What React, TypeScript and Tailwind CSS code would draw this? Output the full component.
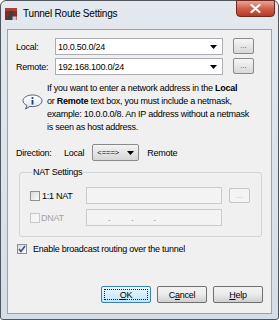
import React from "react";

const font = "font-['Liberation_Sans',Arial,sans-serif]";

function Arrow() {
  return (
    <svg width="7" height="4" viewBox="0 0 7 4" className="shrink-0">
      <path d="M0 0 H7 L3.5 4 Z" fill="#000" />
    </svg>
  );
}

function Combo({ value }: { value: string }) {
  return (
    <div className="w-[168px] h-[17px] border border-[#abadb3] bg-white flex items-center pl-[2px] pr-[5px]">
      <span className="flex-1 text-black">{value}</span>
      <Arrow />
    </div>
  );
}

function DotsButton({ disabled = false }: { disabled?: boolean }) {
  return (
    <div
      className={
        disabled
          ? "w-[21px] h-[15px] rounded-[2px] border border-[#c4c4c4] bg-[#f4f4f4] flex items-center justify-center text-[8px] leading-[8px] tracking-normal text-[#b5b5b5]"
          : "w-[21px] h-[16px] rounded-[2px] border border-[#8a8a8a] bg-gradient-to-b from-[#f6f6f6] to-[#d8d8d8] flex items-center justify-center text-[8px] leading-[8px] tracking-normal text-[#555]"
      }
    >
      ...
    </div>
  );
}

function CheckBox({ checked = false, disabled = false }: { checked?: boolean; disabled?: boolean }) {
  return (
    <div
      className={
        disabled
          ? "w-[10px] h-[10px] border border-[#c8c8c8] bg-[#f5f5f5] shrink-0"
          : "w-[10px] h-[10px] border border-[#8e8f8f] bg-gradient-to-br from-[#dcdcdc] to-[#fbfbfb] shrink-0 flex items-center justify-center"
      }
    >
      {checked && (
        <svg width="8" height="8" viewBox="0 0 8 8">
          <path d="M1 4 L3 6.5 L7 1" stroke="#3b4f8c" strokeWidth="1.6" fill="none" />
        </svg>
      )}
    </div>
  );
}

function InfoIcon() {
  return (
    <svg width="21" height="16" viewBox="0 0 21 16" className="shrink-0">
      <defs>
        <linearGradient id="ig" x1="0" y1="0" x2="0" y2="1">
          <stop offset="0" stopColor="#ffffff" />
          <stop offset="1" stopColor="#dfe5ef" />
        </linearGradient>
      </defs>
      <path
        d="M10.5 1 C16 1 20 3.6 20 6.8 C20 10 16 12.6 10.5 12.6 C9.6 12.6 8.8 12.5 8 12.4 L3.5 15 L5 11.4 C2.6 10.3 1 8.7 1 6.8 C1 3.6 5 1 10.5 1 Z"
        fill="url(#ig)"
        stroke="#4f5f7a"
        strokeWidth="1"
      />
      <circle cx="10.5" cy="4" r="1.1" fill="#1f3a78" />
      <rect x="9.6" y="6" width="1.8" height="4.6" fill="#1f3a78" />
    </svg>
  );
}

function WinIcon() {
  return (
    <svg width="12" height="12" viewBox="0 0 12 12" className="shrink-0">
      <rect x="0" y="0" width="12" height="12" fill="#8a2b27" />
      <rect x="0" y="0" width="12" height="3" fill="#a84038" />
      <circle cx="6" cy="5" r="2.2" fill="#3a3f48" />
      <path d="M2 12 C2 8 4 7.5 6 7.5 C8 7.5 10 8 10 12 Z" fill="#3a3f48" />
      <rect x="7.5" y="8.5" width="4" height="3.5" fill="#c9cdd3" />
    </svg>
  );
}

function DlgButton({ children, focused = false }: { children: React.ReactNode; focused?: boolean }) {
  return (
    <div
      className={
        focused
          ? "w-[50px] h-[17px] rounded-[2px] border border-[#3c7fb1] bg-gradient-to-b from-[#eaf6fd] to-[#bee6fd] flex items-center justify-center p-[2px]"
          : "w-[50px] h-[17px] rounded-[2px] border border-[#707070] bg-gradient-to-b from-[#f2f2f2] via-[#ebebeb] to-[#cfcfcf] flex items-center justify-center"
      }
    >
      {focused ? (
        <div className="w-full h-full border border-dotted border-[#222] flex items-center justify-center leading-[10px] text-black">
          {children}
        </div>
      ) : (
        <span className="leading-[10px] text-black">{children}</span>
      )}
    </div>
  );
}

export default function App() {
  return (
    <div className={`w-[279px] h-[320px] bg-white ${font}`}>
      <div className="w-[279px] h-[320px] border border-[#50565e] rounded-t-[6px] rounded-b-[3px] bg-gradient-to-b from-[#e4e9ef] to-[#d5dde6] flex flex-col">
        {/* title bar */}
        <div className="h-[28px] flex items-start shrink-0">
          <div className="ml-[4px] mt-[7px]">
            <WinIcon />
          </div>
          <span className="ml-[6px] mt-[6px] text-[10px] leading-[13px] tracking-[-0.2px] text-black">
            Tunnel Route Settings
          </span>
          <div className="ml-auto mr-[3px] -mt-[1px] w-[39px] h-[17px] rounded-b-[4px] border border-[#6e2a20] bg-gradient-to-b from-[#e7a597] via-[#d0604c] to-[#b93a26] flex items-center justify-center">
            <svg width="11" height="9" viewBox="0 0 11 9">
              <path d="M1.5 1 L9.5 8 M9.5 1 L1.5 8" stroke="#ffffff" strokeWidth="2.2" strokeLinecap="round" />
            </svg>
          </div>
        </div>

        {/* client area */}
        <div className="mx-[6px] mb-[5px] flex-1 border border-[#97a3b2] bg-[#f0f0f0] flex flex-col pl-[8px] text-[9px] leading-[12px] tracking-[-0.25px] text-black">
          {/* Local row */}
          <div className="mt-[8px] flex items-start">
            <div className="w-[39px] h-[17px] flex items-center">Local:</div>
            <Combo value="10.0.50.0/24" />
            <div className="ml-[10px]">
              <DotsButton />
            </div>
          </div>
          {/* Remote row */}
          <div className="mt-[3px] flex items-start">
            <div className="w-[39px] h-[17px] flex items-center">Remote:</div>
            <Combo value="192.168.100.0/24" />
            <div className="ml-[10px]">
              <DotsButton />
            </div>
          </div>

          {/* info */}
          <div className="mt-[7px] flex items-start">
            <div className="ml-[6px] mt-[12px]">
              <InfoIcon />
            </div>
            <p className="ml-[4px] w-[216px] leading-[13px] whitespace-nowrap">
              If you want to enter a network address in the <b>Local</b>
              <br />
              or <b>Remote</b> text box, you must include a netmask,
              <br />
              example: 10.0.0.0/8. An IP address without a netmask
              <br />
              is seen as host address.
            </p>
          </div>

          {/* direction */}
          <div className="mt-[10px] flex items-center h-[17px]">
            <span className="w-[48px]">Direction:</span>
            <span>Local</span>
            <div className="ml-[8px] w-[47px] h-[17px] rounded-[2px] border border-[#8a8a8a] bg-gradient-to-b from-[#f4f4f4] to-[#d6d6d6] flex items-center pl-[4px] pr-[4px]">
              <span className="flex-1 text-[7.5px] leading-[8px] tracking-normal">&lt;===&gt;</span>
              <Arrow />
            </div>
            <span className="ml-[8px]">Remote</span>
          </div>

          {/* NAT settings */}
          <fieldset className="mt-[5px] ml-[3px] w-[243px] border border-[#d0d5da] rounded-[3px] pl-[10px] pb-[10px]">
            <legend className="ml-[2px] px-[1px] leading-[12px]">NAT Settings</legend>
            <div className="mt-[9px] flex items-center h-[17px]">
              <div className="w-[56px] flex items-center">
                <CheckBox />
                <span className="ml-[2px]">1:1 NAT</span>
              </div>
              <div className="w-[136px] h-[17px] border border-[#c9cbd0] bg-[#f3f3f3]" />
              <div className="ml-[7px]">
                <DotsButton disabled />
              </div>
            </div>
            <div className="mt-[5px] flex items-center h-[17px]">
              <div className="w-[56px] flex items-center">
                <CheckBox disabled />
                <span className="ml-[1px] text-[#a3a3a3]">DNAT</span>
              </div>
              <div className="w-[136px] h-[17px] border border-[#c9cbd0] bg-[#f3f3f3] flex items-center text-[#8c8c8c]">
                <span className="ml-[21px]">.</span>
                <span className="ml-[21px]">.</span>
                <span className="ml-[20px]">.</span>
              </div>
            </div>
          </fieldset>

          {/* broadcast */}
          <div className="mt-[6px] ml-[1px] flex items-center h-[12px]">
            <CheckBox checked />
            <span className="ml-[6px]">Enable broadcast routing over the tunnel</span>
          </div>

          {/* buttons */}
          <div className="mt-[31px] flex justify-end gap-[6px] pr-[8px]">
            <DlgButton focused>
              <span className="underline">O</span>K
            </DlgButton>
            <DlgButton>
              C<span className="underline">a</span>ncel
            </DlgButton>
            <DlgButton>
              <span className="underline">H</span>elp
            </DlgButton>
          </div>
        </div>
      </div>
    </div>
  );
}
